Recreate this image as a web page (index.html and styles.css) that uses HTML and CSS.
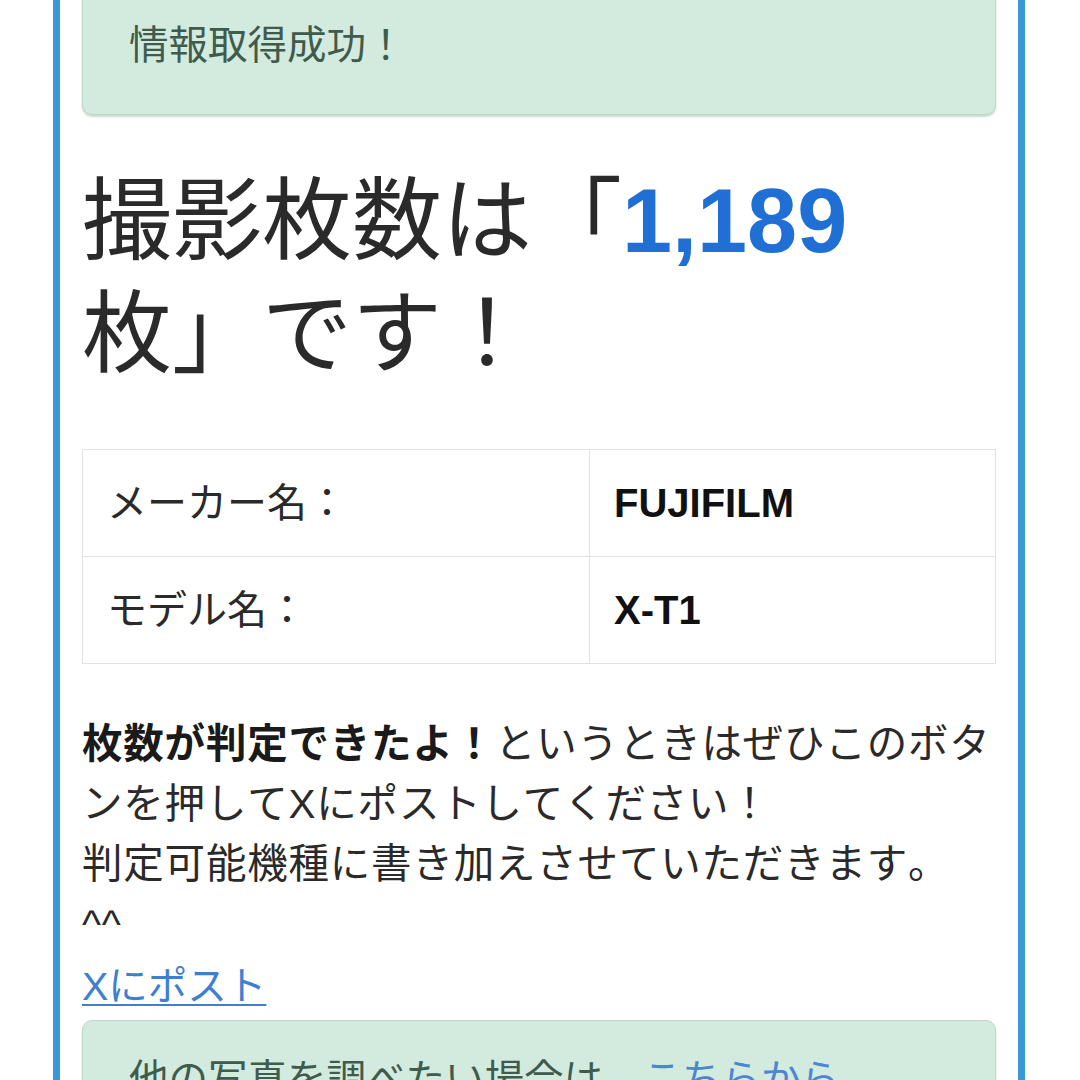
FILE: index.html
```html
<!DOCTYPE html>
<html lang="ja">
<head>
<meta charset="utf-8">
<link rel="stylesheet" href="styles.css">
</head>
<body>
<div class="frame">
  <div class="alert alert-top">情報取得成功！</div>
  <h1 class="count">撮影枚数は「<span class="num">1,189</span>枚」です！</h1>
  <table class="info">
    <tr><td class="label">メーカー名：</td><td class="value">FUJIFILM</td></tr>
    <tr><td class="label">モデル名：</td><td class="value">X-T1</td></tr>
  </table>
  <p class="note"><b>枚数が判定できたよ！</b>というときはぜひこのボタンを押してXにポストしてください！<br>判定可能機種に書き加えさせていただきます。<br>^^</p>
  <a class="post" href="#">Xにポスト</a>
  <div class="alert alert-bottom">他の写真を調べたい場合は、<a class="inlink" href="#">こちらから</a></div>
</div>
</body>
</html>
```
FILE: styles.css
```css
html, body {
  margin: 0;
  padding: 0;
  background: #ffffff;
  overflow: hidden;
}
body {
  font-family: "Liberation Sans", "Noto Sans CJK JP", sans-serif;
  color: #222222;
  font-size: 39.5px;
  line-height: 60px;
  font-kerning: none;
  text-spacing-trim: space-all;
  font-feature-settings: "palt" 0, "kern" 0;
}
.frame {
  margin: -30px 0 0 53px;
  width: 914px;
  padding: 0 22px 40px 22px;
  border-left: 7px solid #3a98d8;
  border-right: 7px solid #3a98d8;
  min-height: 1200px;
}
.alert {
  background: #d3eadf;
  border: 1px solid #bcd9c8;
  border-radius: 10px;
  box-shadow: 0 2px 2px rgba(120, 150, 135, 0.35);
  color: #3f5b4c;
  padding: 44px 46px 39px 46px;
}
.alert-bottom {
  margin-top: 2px;
  padding-top: 28px;
}
.count {
  margin: 50px 0 0 0;
  font-size: 90px;
  line-height: 113px;
  font-weight: 400;
  color: #2a2a2a;
}
.num {
  color: #1f6fd4;
  font-weight: 700;
}
.info {
  margin-top: 58px;
  width: 914px;
  border-collapse: collapse;
}
.info td {
  border: 1.5px solid #e2e2e2;
  padding: 23px 24px;
  line-height: 60px;
  font-size: 40px;
}
.info td.label {
  width: 458px;
  color: #2a2a2a;
}
.info td.value {
  font-weight: 700;
  font-size: 40px;
  color: #111111;
}
.note {
  margin: 50px 0 0 0;
  line-height: 60px;
  font-size: 40.5px;
  letter-spacing: 0.8px;
  color: #2a2a2a;
}
.note b {
  color: #1a1a1a;
}
.post {
  display: block;
  color: #3f7fd0;
  text-decoration: underline;
  text-underline-offset: 4px;
  text-decoration-thickness: 2px;
  line-height: 64px;
  width: fit-content;
}
.inlink {
  color: #4a86d2;
  text-decoration: none;
}
```
